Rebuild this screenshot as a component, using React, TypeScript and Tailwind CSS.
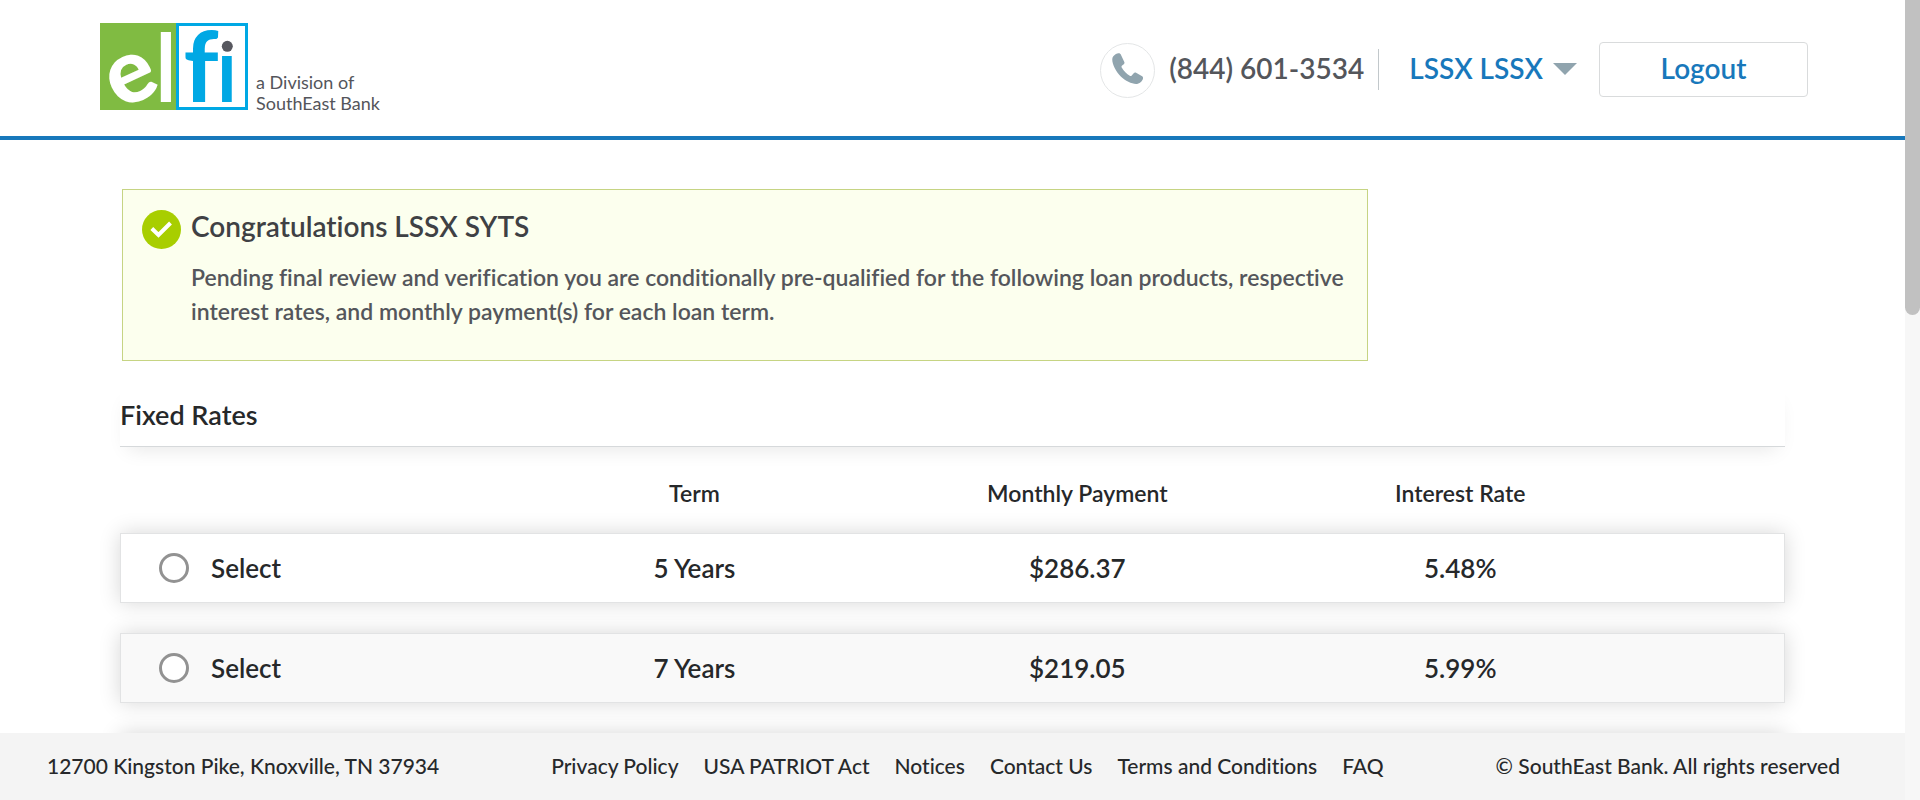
type Rate = { term: string; payment: string; rate: string };

const fixedRates: Rate[] = [
  { term: "5 Years", payment: "$286.37", rate: "5.48%" },
  { term: "7 Years", payment: "$219.05", rate: "5.99%" },
];

const footerLinks = [
  "Privacy Policy",
  "USA PATRIOT Act",
  "Notices",
  "Contact Us",
  "Terms and Conditions",
  "FAQ",
];

function Logo() {
  return (
    <a href="#" aria-label="elfi home" className="flex items-end gap-2">
      <svg
        viewBox="0 0 148 87"
        className="h-[87px] w-[148px] overflow-visible font-['Lato',sans-serif]"
        textAnchor="middle"
        aria-hidden="true"
      >
        <rect width="77" height="87" fill="#80bb42" />
        <rect x="77.5" y="1.5" width="69" height="84" fill="#fff" stroke="#00a8e4" strokeWidth="3" />
        <text x="0" y="22" fontSize="90" fontWeight="900" fill="#fff" transform="translate(32 57) rotate(-25)">e</text>
        <text x="66" y="79" fontSize="94" fontWeight="600" fill="#fff">l</text>
        <text x="127" y="79" fontSize="90" fontWeight="600" fill="#00a8e4">i</text>
        <rect x="116" y="4" width="22" height="28" fill="#fff" />
        <text x="101" y="79" fontSize="98" fontWeight="700" fill="#00a8e4">f</text>
        <circle cx="127.300" cy="23.300" r="5.500" fill="#57585f" />
      </svg>
      <span className="-mb-1 text-[18px] leading-[21px] font-normal text-[#54555b]">
        a Division of
        <br />
        SouthEast Bank
      </span>
    </a>
  );
}

function PhoneIcon() {
  return (
    <svg viewBox="0 0 30 30" className="size-[31px]" fill="#90a4ae" aria-hidden="true">
      <path d="M6 .2C4 .5.8 2.500.3 5.500c-.5 4.500 3.200 12.500 8.200 17.300 4.500 4.500 11 7.400 15.500 7.100 3-.2 5.500-2.800 6-5.200.2-1-.1-1.700-.8-2.200l-5.900-3.300c-.8-.4-1.700-.3-2.300.4l-1.900 2.200c-.5.6-1.200.7-1.900.3-2.800-1.600-6-4.800-7.800-8-.4-.7-.2-1.400.4-1.900l1.600-1.300c.7-.6.900-1.400.5-2.300L8.400 1.300C7.900.4 7.200 0 6 .2z" />
    </svg>
  );
}

function Header() {
  return (
    <header className="flex h-[140px] shrink-0 items-start justify-between border-b-4 border-[#1878bb] pr-[97px] pl-[100px]">
      <div className="pt-[23px]">
        <Logo />
      </div>
      <div className="flex items-center pt-10">
        <span className="mt-[3px] flex size-[55px] items-center justify-center rounded-full border border-[#e4e6e7] bg-white pb-1">
          <PhoneIcon />
        </span>
        <a href="tel:8446013534" className="ml-3.5 border-r border-[#c2c8cb] pr-3.5 pb-[3px] text-[28px] leading-[38px] text-[#54565b]">
          (844) 601-3534
        </a>
        <button type="button" className="ml-[30px] flex items-center gap-2.5 text-[28px] leading-10 text-[#1878bb]">
          <span className="pb-[3px]">LSSX LSSX</span>
          <svg viewBox="0 0 24 12" className="h-3 w-6" fill="#90a4ae" aria-hidden="true">
            <path d="M0 0h24L12 12z" />
          </svg>
        </button>
        <button
          type="button"
          className="ml-[22px] h-[55px] w-[209px] rounded-[4px] border border-[#d9dbdc] bg-white pb-[3px] text-[28px] text-[#1878bb]"
        >
          Logout
        </button>
      </div>
    </header>
  );
}

function Notice() {
  return (
    <section className="ml-0.5 flex max-w-[1246px] gap-2.5 border border-[#c6d483] bg-[#fcffee] pt-5 pr-2 pb-8 pl-[19px]">
      <svg viewBox="0 0 39 39" className="size-[39px] shrink-0" aria-hidden="true">
        <circle cx="19.500" cy="19.500" r="19.500" fill="#a8ce00" />
        <path d="M9.800 18.500l6.700 6.500L28.500 13" fill="none" stroke="#fff" strokeWidth="4" />
      </svg>
      <div>
        <h1 className="text-[28px] leading-8 text-[#3f4144]">Congratulations LSSX SYTS</h1>
        <p className="mt-[18px] text-[23px] leading-[34px] text-[#54565b]">
          Pending final review and verification you are conditionally pre-qualified for the following loan
          products, respective interest rates, and monthly payment(s) for each loan term.
        </p>
      </div>
    </section>
  );
}

function RateTable() {
  return (
    <table className="w-full table-fixed border-separate border-spacing-x-0 border-spacing-y-[30px]">
      <thead>
        <tr className="text-[23px] leading-5">
          <th scope="col" className="w-[23%] p-0" aria-label="Selection" />
          <th scope="col" className="w-[23%] p-0 pt-1.5 font-semibold">Term</th>
          <th scope="col" className="w-[23%] p-0 pt-1.5 font-semibold">Monthly Payment</th>
          <th scope="col" className="w-[23%] p-0 pt-1.5 font-semibold">Interest Rate</th>
          <th scope="col" className="w-[8%] p-0" aria-label="Details" />
        </tr>
      </thead>
      <tbody>
        {fixedRates.map((item) => (
          <tr
            key={item.term}
            className="h-[70px] bg-white text-center text-[26px] shadow-[0_0_20px_rgba(0,0,0,0.16)] even:bg-[#f9f9f9]"
          >
            <td className="border-y border-l border-[#e2e3e4] p-0">
              <label className="flex items-center gap-[22px] pl-[38px]">
                <input
                  type="radio"
                  name="rate"
                  className="size-[30px] appearance-none rounded-full border-3 border-[#929292] bg-white checked:border-8 checked:border-[#1878bb]"
                />
                Select
              </label>
            </td>
            <td className="border-y border-[#e2e3e4] p-0">{item.term}</td>
            <td className="border-y border-[#e2e3e4] p-0">{item.payment}</td>
            <td className="border-y border-[#e2e3e4] p-0">{item.rate}</td>
            <td className="border-y border-r border-[#e2e3e4] p-0" />
          </tr>
        ))}
        <tr className="h-[70px] bg-white shadow-[0_0_20px_rgba(0,0,0,0.16)]" aria-hidden="true">
          <td colSpan={5} className="p-0" />
        </tr>
      </tbody>
    </table>
  );
}

function Footer() {
  return (
    <footer className="flex h-[67px] shrink-0 items-center justify-between bg-[#f4f4f4] pr-[65px] pb-0.5 pl-[47px] text-[21px] font-medium">
      <span>12700 Kingston Pike, Knoxville, TN 37934</span>
      <nav className="flex gap-[25px]">
        {footerLinks.map((link) => (
          <a key={link} href="#">
            {link}
          </a>
        ))}
      </nav>
      <span>© SouthEast Bank. All rights reserved</span>
    </footer>
  );
}

export default function App() {
  return (
    <div className="flex h-screen bg-white font-['Lato','Liberation_Sans',sans-serif] font-semibold text-[#26282a] [font-variant-ligatures:no-common-ligatures]">
      <div className="flex min-w-0 flex-1 flex-col">
        <Header />
        <main className="min-h-0 flex-1 overflow-y-auto px-[120px] pt-[49px] [scrollbar-width:none]">
          <Notice />
          <section>
            <div className="mt-[25px] border-b border-[#d6d9db] bg-white pt-2.5 pb-3 shadow-[0_10px_20px_-8px_rgba(0,0,0,0.1)]">
              <h2 className="text-[27px] leading-[38px]">Fixed Rates</h2>
            </div>
            <RateTable />
          </section>
        </main>
        <Footer />
      </div>
      <div className="w-[15px] shrink-0 bg-[#f7f7f7]" aria-hidden="true">
        <div className="h-[315px] rounded-b-full bg-[#c1c1c1]" />
      </div>
    </div>
  );
}
